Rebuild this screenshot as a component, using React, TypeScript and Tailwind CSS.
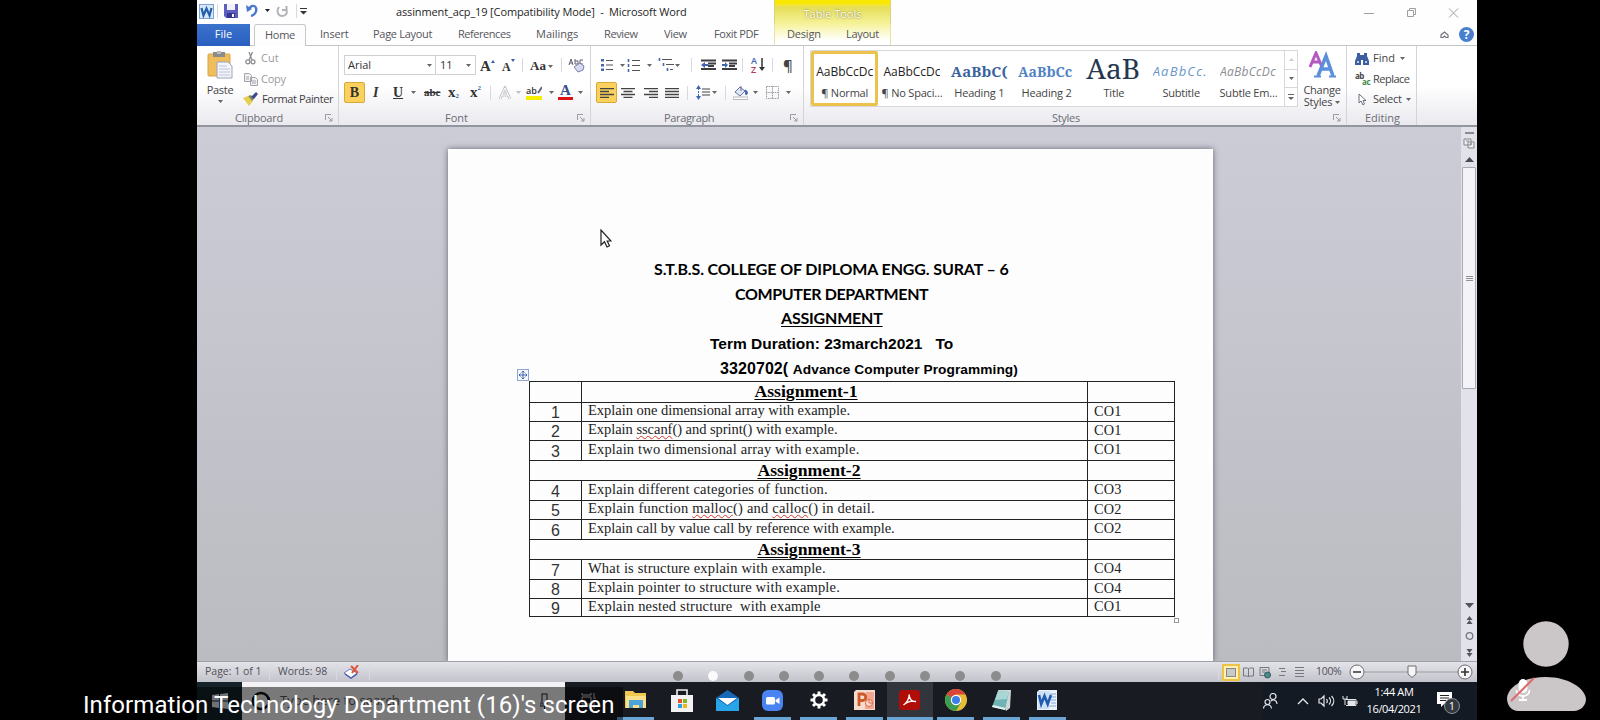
import React from "react";

type Kids = { children?: React.ReactNode; className?: string };

const Caret = ({ className = "" }: { className?: string }) => (
  <svg className={"shrink-0 " + className} width="5" height="3" viewBox="0 0 5 3"><path d="M0 0h5L2.5 3z" fill="#666" /></svg>
);

const Sep = ({ className = "" }: { className?: string }) => <div className={"w-px shrink-0 bg-[#d8d8de] " + className} />;

const Cell = ({ children, className = "" }: Kids) => (
  <div className={"flex h-full shrink-0 items-center whitespace-nowrap " + className}>{children}</div>
);

const Launcher = () => (
  <svg className="shrink-0" width="8" height="8" viewBox="0 0 8 8" fill="none" stroke="#9a9aa2"><path d="M.5 6V.5H6M3 3l4 4M7 4v3H4" /></svg>
);

const GroupLabel = ({ children, className = "" }: Kids) => (
  <div className={"flex h-[13px] items-center text-[11px] leading-none text-[#6c6c74] " + className}>{children}</div>
);

function WordLogo({ size }: { size: number }) {
  return (
    <svg width={size} height={size} viewBox="0 0 20 20">
      <path d="M2 0h18v20H0V2z" fill="#e9f1fb" />
      <path d="M13 4h6M13 7h6M14 10h5M14 13h5M12 16h7" stroke="#7fa4d8" />
      <path d="M1 1h12l-1 18H1z" fill="#cfe0f5" />
      <path d="M2 5l2.200 9L7.500 6l3.200 8L14 5" fill="none" stroke="#1f5bb0" strokeWidth="2.600" />
    </svg>
  );
}

function TitleBar() {
  return (
    <div className="flex h-6 text-[#333]">
      <Cell className="w-[20px] pb-[2px] pl-[2px]">
        <svg width="15" height="15" viewBox="0 0 15 15"><rect x=".5" y=".5" width="14" height="14" fill="#d8e7f8" stroke="#7ea3d3" /><path d="M2.500 4l2 7.500 3-7 3 7 2-7.500" fill="none" stroke="#2260ad" strokeWidth="2.200" /></svg>
      </Cell>
      <Cell className="w-[7px] pb-[2px]"><Sep className="h-[14px]" /></Cell>
      <Cell className="w-[22px] pb-[2px]">
        <svg width="14" height="14" viewBox="0 0 14 14"><path d="M0 0h14v14H2l-2-2z" fill="#5d5fc0" /><path d="M3 0h8v6H3z" fill="#f1f1fb" /><path d="M3 9h8v5H3z" fill="#34368f" /><path d="M8 10h2v3H8z" fill="#fff" /></svg>
      </Cell>
      <Cell className="w-[19px] pb-[3px]">
        <svg width="12" height="13" viewBox="0 0 12 13" fill="none" stroke="#4a78cf" strokeWidth="2.400"><path d="M5 12c4-1 6-5 5-8S5 1 3 5" /><path d="M0 1l1 7 5-3z" fill="#4a78cf" stroke="none" /></svg>
      </Cell>
      <Cell className="w-[11px] pb-[4px]"><svg width="5" height="3"><path d="M0 0h5L2.500 3z" fill="#222" /></svg></Cell>
      <Cell className="w-[20px] pb-[2px]">
        <svg width="13" height="13" viewBox="0 0 13 13" fill="none" stroke="#b2b2b8" strokeWidth="2"><path d="M10.500 1v4H6M3 2C0 6 2 11 6 11s6-3 4-7" /></svg>
      </Cell>
      <Cell className="w-[4px] pb-[2px]"><Sep className="h-[14px]" /></Cell>
      <Cell className="w-[96px] pb-[2px]">
        <svg width="7" height="8" viewBox="0 0 7 8" fill="#333"><path d="M0 1h7v1H0zM0 4h7L3.500 7.500z" /></svg>
      </Cell>
      <Cell className="w-[378px] text-[11px] tracking-[-0.130px] text-[#1e1e1e]">assinment_acp_19 [Compatibility Mode]&nbsp; -&nbsp; Microsoft Word</Cell>
      <div className="flex h-6 w-[117px] shrink-0 items-center justify-center border-x border-[#d9d478] bg-linear-to-b from-[#fbe800] from-15% via-[#e6de55] via-30% to-[#f6f29a] pt-[4px] text-[11px] text-[#fffef0] [text-shadow:0_0_2px_#6d6a2a]">Table Tools</div>
      <Cell className="ml-auto w-[113px] pt-[2px]">
        <svg width="100" height="12" viewBox="0 0 100 12" fill="none" stroke="#a0a0a0"><path d="M0 6.500h10M43.500 3.500h6v6h-6zM45.500 3.500v-2h6v6h-2M85 1.500l9 9M94 1.500l-9 9" /></svg>
      </Cell>
    </div>
  );
}

function TabRow() {
  return (
    <div className="flex h-[22px] border-b border-[#c3c4ca] text-[11px] text-[#55555a]">
      <div className="flex h-[22px] w-[53px] shrink-0 items-center justify-center bg-linear-to-b from-[#3a72cc] to-[#2a5fc0] pb-[1px] text-white">File</div>
      <div className="ml-[4px] flex h-[22px] w-[52px] shrink-0 items-center justify-center rounded-t-[3px] border border-b-0 border-[#c8c9cf] bg-[#fdfdfe] pb-[1px] tracking-[-0.300px]">Home</div>
      <Cell className="ml-[14px] w-[53px] tracking-[-0.200px]">Insert</Cell>
      <Cell className="w-[85px] tracking-[-0.300px]">Page Layout</Cell>
      <Cell className="w-[78px] tracking-[-0.450px]">References</Cell>
      <Cell className="w-[68px]">Mailings</Cell>
      <Cell className="w-[60px] tracking-[-0.400px]">Review</Cell>
      <Cell className="w-[50px] tracking-[-0.300px]">View</Cell>
      <Cell className="w-[60px] tracking-[-0.400px]">Foxit PDF</Cell>
      <div className="flex h-[21px] w-[117px] shrink-0 border-x border-[#e8e4a8] bg-linear-to-b from-[#f6f29a] to-white to-80%">
        <Cell className="w-[71px] pl-[12px] tracking-[-0.200px]">Design</Cell>
        <Cell className="tracking-[-0.300px]">Layout</Cell>
      </div>
      <div className="ml-auto flex items-center gap-[10px] pr-[3px]">
        <svg width="9" height="8" viewBox="0 0 9 8" fill="none" stroke="#707078" strokeWidth="1.200"><path d="M1 4l3.500-3L8 4v2.500H6L4.500 5 3 6.500H1z" /></svg>
        <div className="flex h-[15px] w-[15px] items-center justify-center rounded-full bg-[#4a7fd0] text-[12px] font-bold text-white">?</div>
      </div>
    </div>
  );
}

function ClipboardGroup() {
  return (
    <div className="flex w-[142px] shrink-0 flex-col border-r border-[#d3d3da]">
      <div className="flex h-[65px]">
        <div className="flex w-[46px] shrink-0 flex-col items-center pt-[5px] text-[11px] leading-none">
          <svg width="27" height="29" viewBox="0 0 27 29"><rect x="1" y="3" width="22" height="22" rx="1" fill="#f0bd5c" stroke="#d9a545" /><path d="M6 1h12v5H6z" fill="#8b8b8e" /><rect x="10" y="0" width="4" height="3" fill="#bbb" /><path d="M10 11h11l4 4v12H10z" fill="#f3f5fb" stroke="#9aa3bb" /><path d="M12 15h8M12 18h11M12 21h11M12 24h11" stroke="#bcc5d8" /></svg>
          <span className="mt-[4px] tracking-[-0.300px]">Paste</span>
          <Caret className="mt-[5px]" />
        </div>
        <div className="flex flex-col pt-[2px] text-[11px] whitespace-nowrap text-[#9b9ba1]">
          <div className="flex h-[21px] items-center">
            <svg className="mr-[5px] ml-[2px]" width="11" height="13" viewBox="0 0 11 13" fill="none" stroke="#8c8c92" strokeWidth="1.300"><path d="M4 0l3 8M7.500 0L4 8" /><circle cx="2.800" cy="9.800" r="2" /><circle cx="8" cy="9.800" r="2" /></svg>Cut
          </div>
          <div className="flex h-[20px] items-center tracking-[-0.300px]">
            <svg className="mr-[3px]" width="15" height="13" viewBox="0 0 15 13" fill="#f0f0f2" stroke="#a5a5ad"><path d="M1.500.5h5l2 2v6h-7zM7.500 4.500h5l2 2v6h-7zM3 4h3M3 6h3M9 8h4M9 10h4" /></svg>Copy
          </div>
          <div className="flex h-[20px] items-center tracking-[-0.400px] text-[#3f3f44]">
            <svg className="mr-[4px]" width="15" height="14" viewBox="0 0 15 14"><path d="M0 6l5-2 5 5-4 5z" fill="#e6cf4f" /><path d="M5 4l4 5 2-2-3-4z" fill="#8a8a5a" /><path d="M8 5l5-5 2 2-4 5z" fill="#3f4a8a" /></svg>Format Painter
          </div>
        </div>
      </div>
      <GroupLabel className="justify-between pr-[5px] pl-[38px] tracking-[-0.200px]">Clipboard<Launcher /></GroupLabel>
    </div>
  );
}

function FontGroup() {
  return (
    <div className="flex w-[252px] shrink-0 flex-col border-r border-[#d3d3da]">
      <div className="flex h-[65px] flex-col pt-[9px] pl-[5px] text-[#333]">
        <div className="flex h-[20px] text-[11px]">
          <Cell className="w-[92px] justify-between border border-[#d0d0d6] bg-white px-[3px]">Arial<Caret /></Cell>
          <Cell className="w-[40px] justify-between border border-l-0 border-[#d0d0d6] bg-white px-[4px]">11<Caret /></Cell>
          <Cell className="w-[21px] pt-[2px] pl-[4px] font-['Liberation_Serif',serif] text-[15px] font-bold">A<svg className="-mt-[10px]" width="4" height="3"><path d="M0 3h4L2 0z" fill="#3c5ea8" /></svg></Cell>
          <Cell className="w-[21px] pt-[4px] pl-[5px] font-['Liberation_Serif',serif] text-[12px] font-bold">A<svg className="-mt-[14px]" width="4" height="3"><path d="M0 0h4L2 3z" fill="#3c5ea8" /></svg></Cell>
          <Cell className="w-[12px] pl-[4px]"><Sep className="h-[14px]" /></Cell>
          <Cell className="w-[31px] gap-[2px] pt-[2px] font-['Liberation_Serif',serif] text-[13px] font-bold">Aa<Caret /></Cell>
          <Cell className="w-[7px]"><Sep className="h-[14px]" /></Cell>
          <Cell>
            <svg width="17" height="16" viewBox="0 0 17 16" fill="none" stroke="#5d6070"><path d="M1 8l2-6 2 6M2 6h3M7 2v5h3V4H7M15 3h-3v4h3" /><path d="M6 10l6-4 4 3-1 4-5 2z" fill="#d7daf0" stroke="#7a80ad" /></svg>
          </Cell>
        </div>
        <div className="mt-[7px] flex h-[21px] font-['Liberation_Serif',serif]">
          <Cell className="w-[21px] justify-center rounded-[2px] border border-[#d9a93a] bg-[#fbd15d] text-[14px] font-bold">B</Cell>
          <Cell className="w-[28px] pl-[8px] text-[14px] font-bold italic">I</Cell>
          <Cell className="w-[31px] gap-[8px] text-[14px] font-bold underline"><span>U</span><Caret /></Cell>
          <Cell className="w-[24px] text-[11px] font-bold line-through">abc</Cell>
          <Cell className="w-[22px] text-[15px] font-bold">x<span className="mt-[8px] text-[7px] text-[#3c5ea8]">2</span></Cell>
          <Cell className="w-[20px] text-[15px] font-bold">x<span className="-mt-[8px] text-[7px] text-[#3c5ea8]">2</span></Cell>
          <Cell className="w-[8px]"><Sep className="h-[14px]" /></Cell>
          <Cell className="w-[28px] gap-[4px]">
            <svg width="14" height="14" viewBox="0 0 14 14" fill="none" stroke="#c5c5cb" strokeWidth="3"><path d="M2 13L7 2l5 11M4 9h6" /><path d="M2 13L7 2l5 11M4 9h6" stroke="#fff" strokeWidth="1" /></svg><Caret className="opacity-40" />
          </Cell>
          <Cell className="w-[32px] gap-[7px] font-['Open_Sans',sans-serif]">
            <span className="flex h-[16px] w-[16px] flex-col text-[9px] leading-[11px] font-semibold"><span className="flex">ab<svg width="6" height="9"><path d="M1 8l4-6" stroke="#667" strokeWidth="2" /></svg></span><span className="h-[4px] bg-[#f5f000]" /></span><Caret />
          </Cell>
          <Cell className="gap-[5px]">
            <span className="flex h-[16px] w-[15px] flex-col items-center text-[15px] leading-[11px] font-bold text-[#34508f]">A<span className="mt-[1px] h-[3px] w-full bg-[#dc1216]" /></span><Caret />
          </Cell>
        </div>
      </div>
      <GroupLabel className="justify-between pr-[5px] pl-[106px]">Font<Launcher /></GroupLabel>
    </div>
  );
}

const linesLeft = "M0 .5h14M0 3.500h9M0 6.500h14M0 9.500h9";
const linesCenter = "M0 .5h14M2.500 3.500h9M0 6.500h14M2.500 9.500h9";
const linesRight = "M0 .5h14M5 3.500h9M0 6.500h14M5 9.500h9";
const linesFull = "M0 .5h14M0 3.500h14M0 6.500h14M0 9.500h14";

const Align = ({ d }: { d: string }) => (
  <svg width="14" height="10" viewBox="0 0 14 10" fill="none" stroke="#444" strokeWidth="1.400"><path d={d} /></svg>
);

function ParagraphGroup() {
  return (
    <div className="flex w-[213px] shrink-0 flex-col border-r border-[#d3d3da]">
      <div className="flex h-[65px] flex-col pt-[9px] pl-[5px]">
        <div className="flex h-[20px]">
          <Cell className="w-[31px] gap-[7px] pl-[5px]"><svg width="12" height="12" viewBox="0 0 12 12"><path d="M0 0h3v2.500H0zM0 5h3v2.500H0zM0 9.500h3V12H0z" fill="#4766ad" /><path d="M5 1.500h7M5 6h7M5 10.500h7" stroke="#555" strokeWidth="1.200" /></svg><Caret /></Cell>
          <Cell className="w-[31px] gap-[7px]"><svg width="13" height="13" viewBox="0 0 13 13"><path d="M1.500 0v3M1.500 5v3M1.500 10v3" stroke="#4766ad" strokeWidth="1.600" /><path d="M5 1.500h8M5 6.500h8M5 11.500h8" stroke="#555" strokeWidth="1.200" /></svg><Caret /></Cell>
          <Cell className="w-[30px]"><svg width="17" height="14" viewBox="0 0 17 14"><path d="M1.500 0v3M5.500 5v3M9.500 10v3" stroke="#4766ad" strokeWidth="1.600" /><path d="M4 1.500h10M8 6.500h8M12 11.500h3" stroke="#555" strokeWidth="1.200" /></svg><Caret /></Cell>
          <Cell className="w-[13px] pl-[3px]"><Sep className="h-[14px]" /></Cell>
          <Cell className="w-[21px]"><svg width="15" height="12" viewBox="0 0 15 12"><path d="M0 1.500h15M7 4.500h8M7 7h6M0 10h15" stroke="#3e3e44" strokeWidth="1.800" /><path d="M0 6l4-3v2h3v2H4v2z" fill="#3f64b5" /></svg></Cell>
          <Cell className="w-[20px]"><svg width="15" height="12" viewBox="0 0 15 12"><path d="M0 1.500h15M7 4.500h8M7 7h6M0 10h15" stroke="#3e3e44" strokeWidth="1.800" /><path d="M6 6L3 3v2H0v2h3v2z" fill="#3f64b5" /></svg></Cell>
          <Cell className="w-[9px]"><Sep className="h-[14px]" /></Cell>
          <Cell className="w-[21px] gap-[2px]"><span className="flex flex-col text-[9px] leading-[9px] font-semibold"><span className="text-[#3f64b5]">A</span><span className="text-[#b04050]">Z</span></span><svg width="6" height="14" viewBox="0 0 6 14"><path d="M3 0v10" stroke="#333" strokeWidth="1.500" /><path d="M0 9h6l-3 4z" fill="#333" /></svg></Cell>
          <Cell className="w-[11px]"><Sep className="h-[14px]" /></Cell>
          <Cell className="text-[15px] font-semibold text-[#444]">¶</Cell>
        </div>
        <div className="mt-[7px] flex h-[21px]">
          <Cell className="w-[21px] justify-center rounded-[2px] border border-[#d9a93a] bg-[#fbd15d]"><Align d={linesLeft} /></Cell>
          <Cell className="w-[27px] pl-[4px]"><Align d={linesCenter} /></Cell>
          <Cell className="w-[21px]"><Align d={linesRight} /></Cell>
          <Cell className="w-[22px]"><Align d={linesFull} /></Cell>
          <Cell className="w-[9px]"><Sep className="h-[14px]" /></Cell>
          <Cell className="w-[29px] gap-[2px]"><svg width="14" height="15" viewBox="0 0 14 15"><path d="M0 4l2.500-4L5 4zM0 11l2.500 4L5 11z" fill="#3f64b5" /><path d="M2.500 3v9" stroke="#3f64b5" strokeDasharray="2 1" /><path d="M6 4h8M6 7h8M6 10h8" stroke="#444" strokeWidth="1.200" /></svg><Caret /></Cell>
          <Cell className="w-[8px]"><Sep className="h-[14px]" /></Cell>
          <Cell className="w-[33px] gap-[5px]"><svg width="15" height="15" viewBox="0 0 15 15"><path d="M2 7l5-5 5 4-5 5z" fill="#dfe6f4" stroke="#67719a" /><path d="M8 1v5" stroke="#67719a" /><path d="M12 5c3 1 3 4 1 5z" fill="#3f64b5" stroke="#3f64b5" /><path d="M0 12h15v2.500H0z" fill="#fff" stroke="#a7a7ad" strokeWidth=".8" /></svg><Caret /></Cell>
          <Cell className="gap-[7px]"><svg width="13" height="13" viewBox="0 0 13 13" fill="none" stroke="#9e9ea6"><path d="M.5.5h12v12H.5zM6.500 0v13M0 6.500h13" strokeDasharray="1.500 .7" /></svg><Caret /></Cell>
        </div>
      </div>
      <GroupLabel className="justify-between pr-[5px] pl-[73px] tracking-[-0.350px]">Paragraph<Launcher /></GroupLabel>
    </div>
  );
}

const styleTiles = [
  { s: "AaBbCcDc", n: "¶ Normal", c: "pt-[3px] text-[12px] text-[#222]" },
  { s: "AaBbCcDc", n: "¶ No Spaci...", c: "pt-[3px] text-[12px] text-[#222]" },
  { s: "AaBbC(", n: "Heading 1", c: "pt-[3px] font-['Noto_Serif','Liberation_Serif',serif] text-[15px] tracking-[0.100px] font-bold text-[#3a639c]" },
  { s: "AaBbCc", n: "Heading 2", c: "pt-[3px] font-['Noto_Serif','Liberation_Serif',serif] text-[14px] font-bold text-[#5083c2]" },
  { s: "AaB", n: "Title", c: "pb-[5px] pl-[1px] font-['Noto_Serif','Liberation_Serif',serif] text-[28px] text-[#26374f]" },
  { s: "AaBbCc.", n: "Subtitle", c: "pt-[3px] text-[13px] italic tracking-[1.200px] text-[#6a96cc]" },
  { s: "AaBbCcDc", n: "Subtle Em...", c: "pt-[3px] text-[12px] italic tracking-[0.300px] text-[#8d8d92]" },
];

function StylesGroup() {
  return (
    <div className="flex w-[543px] shrink-0 flex-col border-r border-[#d3d3da]">
      <div className="flex h-[65px] pt-[4px] pl-[6px]">
        <div className="flex h-[57px] w-[488px] shrink-0 border border-[#d6d6dc] bg-white">
          {styleTiles.map((t, i) => (
            <div key={t.n} className={"flex w-[67.300px] shrink-0 flex-col items-center overflow-hidden " + (i === 0 ? "rounded-[2px] border-[3px] border-[#ecc24a]" : "pt-[3px]")}>
              <div className={"flex h-[32px] w-[57px] shrink-0 items-center overflow-hidden leading-none whitespace-nowrap " + t.c}>{t.s}</div>
              <div className="text-[11px] leading-[13px] tracking-[-0.200px] whitespace-nowrap text-[#444]">{t.n}</div>
            </div>
          ))}
          <div className="ml-auto flex w-[13px] flex-col divide-y divide-[#d6d6dc] border-l border-[#d6d6dc]">
            <div className="flex flex-1 items-center justify-center"><svg width="5" height="3"><path d="M0 3h5L2.500 0z" fill="#ccc" /></svg></div>
            <div className="flex flex-1 items-center justify-center"><Caret /></div>
            <div className="flex flex-1 items-center justify-center"><svg width="6" height="7"><path d="M0 0h6v1H0zM0 3h6L3 6z" fill="#666" /></svg></div>
          </div>
        </div>
        <div className="flex w-[48px] flex-col items-center pt-[1px] text-[11px] leading-[12px]">
          <svg className="shrink-0" width="28" height="27" viewBox="0 0 28 27" fill="none"><path d="M2 16L8 2l6 14M4 11h8" stroke="#b45ac0" strokeWidth="3" /><path d="M10 25l8-20 7 20M13 18h10" stroke="#5b8fdc" strokeWidth="3.500" /><path d="M6 25.500h7M21 25.500h7" stroke="#5b8fdc" strokeWidth="2" /></svg>
          <span className="mt-[6px] tracking-[-0.250px]">Change</span>
          <span className="flex items-center gap-[3px] tracking-[-0.200px]">Styles<Caret /></span>
        </div>
      </div>
      <GroupLabel className="justify-between pr-[5px] pl-[248px] tracking-[-0.300px]">Styles<Launcher /></GroupLabel>
    </div>
  );
}

function EditingGroup() {
  return (
    <div className="flex w-[70px] shrink-0 flex-col border-r border-[#d3d3da] text-[11px]">
      <div className="flex h-[65px] flex-col pt-[2px] pl-[8px]">
        <div className="flex h-[21px] items-center whitespace-nowrap">
          <svg className="mr-[4px]" width="14" height="13" viewBox="0 0 14 13" fill="#3d5f9f"><path d="M2 1h3v2h4V1h3v3l2 5v4H8V8H6v5H0V9l2-5z" /><path d="M2 9h2v2H2zM10 9h2v2h-2z" fill="#b8c9e8" /></svg>Find<Caret className="ml-[5px]" />
        </div>
        <div className="flex h-[20px] items-center tracking-[-0.500px] whitespace-nowrap">
          <span className="mr-[3px] flex w-[15px] flex-col text-[8px] leading-[6px] font-bold"><span>ab</span><span className="text-right text-[#3e8a4b]">ac</span></span>Replace
        </div>
        <div className="flex h-[20px] items-center tracking-[-0.300px] whitespace-nowrap">
          <svg className="mr-[6px] ml-[3px]" width="9" height="13" viewBox="0 0 9 13" fill="#fff" stroke="#6d7080"><path d="M1 1v9l2-2 2 4 1.500-1L5 7.500h3z" /></svg>Select<Caret className="ml-[4px]" />
        </div>
      </div>
      <GroupLabel className="pl-[18px]">Editing</GroupLabel>
    </div>
  );
}

type Row = { n?: string; t: React.ReactNode; co?: string; h: string; k?: string };
const Bad = ({ children }: Kids) => (
  <span className="underline decoration-[#d8352a] decoration-wavy decoration-[0.8px] underline-offset-[1px] [text-decoration-skip-ink:none]">{children}</span>
);
const rows: Row[] = [
  { t: "Assignment-1", h: "h-[21px]" },
  { n: "1", t: "Explain one dimensional array with example.", co: "CO1", h: "h-[19px]", k: "tracking-[-0.030px]" },
  { n: "2", t: <>Explain <Bad>sscanf</Bad>() and sprint() with example.</>, co: "CO1", h: "h-[19px]", k: "tracking-[-0.040px]" },
  { n: "3", t: "Explain two dimensional array with example.", co: "CO1", h: "h-[20px]", k: "tracking-[0.170px]" },
  { t: "Assignment-2", h: "h-[20px]" },
  { n: "4", t: "Explain different categories of function.", co: "CO3", h: "h-[20px]", k: "tracking-[0.190px]" },
  { n: "5", t: <>Explain function <Bad>malloc</Bad>() and <Bad>calloc</Bad>() in detail.</>, co: "CO2", h: "h-[19px]", k: "tracking-[0.210px]" },
  { n: "6", t: "Explain call by value call by reference with example.", co: "CO2", h: "h-[20px]", k: "tracking-[-0.040px]" },
  { t: "Assignment-3", h: "h-[20px]" },
  { n: "7", t: "What is structure explain with example.", co: "CO4", h: "h-[20px]", k: "tracking-[0.170px]" },
  { n: "8", t: "Explain pointer to structure with example.", co: "CO4", h: "h-[19px]", k: "tracking-[0.170px]" },
  { n: "9", t: <>Explain nested structure&nbsp; with example</>, co: "CO1", h: "h-[18px]", k: "tracking-[0.180px]" },
];

function Page() {
  return (
    <div className="relative mt-[22px] ml-[251px] h-[513px] w-[765px] shrink-0 bg-[#fdfdfe] pt-[108px] text-black shadow-[0_0_6px_rgba(70,70,80,0.75)]">
      <svg className="absolute top-[80px] left-[152px]" width="12" height="19" viewBox="0 0 12 19" fill="#fff" stroke="#222" strokeWidth="1.200"><path d="M1 1v15l3.500-3.300L7 18l2.500-1.200L7.200 12H11z" /></svg>
      <div className="flex h-[124px] flex-col font-['Lato',sans-serif] text-[16px] leading-[24.500px] font-bold whitespace-nowrap">
        <div className="pl-[206px] tracking-[-0.120px]">S.T.B.S. COLLEGE OF DIPLOMA ENGG. SURAT – 6</div>
        <div className="pl-[287px] tracking-[-0.380px]">COMPUTER DEPARTMENT</div>
        <div className="pl-[333px] tracking-[-0.200px] underline underline-offset-2">ASSIGNMENT</div>
        <div className="pt-[1px] pl-[262px] font-['Liberation_Sans',sans-serif] text-[15.500px]">Term Duration: 23march2021&nbsp;&nbsp; To</div>
        <div className="pt-px pl-[272px] font-['Liberation_Sans',sans-serif] text-[16px] tracking-[0.080px]">3320702( <span className="text-[13.700px]">Advance Computer Programming)</span></div>
      </div>
      <svg className="absolute top-[220px] left-[69px]" width="12" height="12" viewBox="0 0 12 12"><rect x=".5" y=".5" width="11" height="11" fill="#f5f8ff" stroke="#8fa5d0" /><path d="M6 2v8M2 6h8M4.500 3.500L6 2l1.500 1.500M4.500 8.500L6 10l1.500-1.500M3.500 4.500L2 6l1.500 1.500M8.500 4.500L10 6 8.500 7.500" fill="none" stroke="#4467b0" /></svg>
      <div className="absolute top-[469px] left-[726px] h-[5px] w-[5px] border border-[#999]" />
      <div className="ml-[81px] flex w-[646px] flex-col border-r border-b border-l border-[#222]">
        {rows.map((r, i) => (
          <div key={i} className={"flex border-t border-[#222] " + r.h}>
            {(r.n || i === 0) && <div className="flex w-[52px] shrink-0 items-center justify-center border-r border-[#222] pt-[2px] font-['Liberation_Sans',sans-serif] text-[16px] leading-none text-[#333]">{r.n}</div>}
            <div className={"flex flex-1 items-center border-r border-[#222] font-['Liberation_Serif',serif] leading-none whitespace-pre " + (r.n ? "pl-[6px] text-[14.500px] text-[#222] " + r.k : "justify-center text-[17.700px] font-bold underline underline-offset-2 " + (i === 0 ? "pr-[57px]" : "pl-px"))}>
              {r.n ? <span className="pb-[3px]">{r.t}</span> : r.t}
            </div>
            <div className="flex w-[86px] shrink-0 items-center pb-[2px] pl-[6px] font-['Liberation_Serif',serif] text-[14.300px] leading-none tracking-[0.200px] text-[#222]">{r.co}</div>
          </div>
        ))}
      </div>
    </div>
  );
}

function ScrollBar() {
  return (
    <div className="flex w-[16px] shrink-0 flex-col items-center bg-[#e2e2ea]">
      <div className="mt-[5px] h-[2px] w-[9px] bg-[#8b8b94]" />
      <svg className="mt-[3px] shrink-0" width="12" height="12" viewBox="0 0 12 12" fill="#eee" stroke="#85858f"><path d="M1 2h7v6H1zM5 5h6v6H5zM3 4h3M7 7h2" /></svg>
      <svg className="mt-[8px] shrink-0" width="9" height="5"><path d="M0 5h9L4.500 0z" fill="#4c4c54" /></svg>
      <div className="mt-[5px] flex h-[222px] w-[14px] flex-col items-center justify-center gap-px rounded-[1px] border border-[#a9a9b3] bg-[#f4f4f8]">
        <div className="h-px w-[7px] bg-[#909098]" /><div className="h-px w-[7px] bg-[#909098]" /><div className="h-px w-[7px] bg-[#909098]" />
      </div>
      <svg className="mt-auto mb-[4px] shrink-0" width="9" height="54" viewBox="0 0 9 54" fill="#55555d"><path d="M0 0h9L4.500 5zM1.500 17h6l-3-4zM1.500 21h6l-3-4zM1.500 46h6l-3 4zM1.500 50h6l-3 4z" /><circle cx="4.500" cy="33" r="3.300" fill="none" stroke="#777780" strokeWidth="1.300" /></svg>
    </div>
  );
}

function StatusBar() {
  return (
    <div className="flex h-[21px] shrink-0 items-center border-t border-[#9da1ab] bg-linear-to-b from-[#e3e3e9] to-[#c3c3cb] text-[10.500px] text-[#50505a]">
      <Cell className="w-[72px] pl-[8px]">Page: 1 of 1</Cell>
      <Cell className="w-[9px]"><Sep className="h-[16px] bg-[#a5a5ad]" /></Cell>
      <Cell className="w-[58px]">Words: 98</Cell>
      <Cell className="w-[8px]"><Sep className="h-[16px] bg-[#a5a5ad]" /></Cell>
      <Cell className="w-[25px]"><svg width="16" height="14" viewBox="0 0 16 14"><path d="M0 8l6-4 7 4-6 5z" fill="#fff" stroke="#6a79c0" /><path d="M1 9l6 4 6-4" fill="none" stroke="#4a5cb8" strokeWidth="1.500" /><path d="M7 1l7 7M14 0L8 8" stroke="#e0553c" strokeWidth="2" /></svg></Cell>
      <Cell><Sep className="h-[16px] bg-[#a5a5ad]" /></Cell>
      <div className="ml-auto flex h-full w-[259px] items-center">
        <Cell className="w-[4px]"><Sep className="h-[16px] bg-[#a5a5ad]" /></Cell>
        <div className="flex h-[17px] w-[18px] shrink-0 items-center justify-center border-2 border-[#eec243] bg-[#fff0b5]"><div className="h-[9px] w-[10px] border border-[#888] bg-[#c9c9c9]" /></div>
        <svg className="ml-[3px] shrink-0" width="64" height="13" viewBox="0 0 64 13" fill="none" stroke="#777780"><path d="M.5 2h4l1 1 1-1h4v8h-4l-1 1-1-1h-4zM5.500 3v8M17 1.500h9v8h-9zM19 4h5M19 6h3M36 2.500h6M38 5.500h5M36 9.500h6M52 1.500h9M52 4.500h9M52 7.500h9M52 10.500h9" /><circle cx="24.500" cy="9" r="3" fill="#3f8f86" stroke="#456" /></svg>
        <span className="ml-[9px] w-[33px] shrink-0 tracking-[-0.300px] whitespace-nowrap">100%</span>
        <svg className="shrink-0" width="124" height="16" viewBox="0 0 124 16" fill="#f6f6f8" stroke="#6c6c74"><path d="M15 8h100" stroke="#999aa2" /><circle cx="8" cy="8" r="7" /><circle cx="116" cy="8" r="7" /><path d="M4 8h8M112 8h8M116 4v8" stroke="#333" strokeWidth="1.600" /><path d="M59 2h8v8l-4 3.500L59 10z" /></svg>
      </div>
    </div>
  );
}

const apps: { k: string; line: boolean; active?: boolean; icon: React.ReactNode }[] = [
  { k: "files", line: true, icon: <svg width="22" height="20" viewBox="0 0 22 20"><path d="M0 1h8l2 2h11v15H0z" fill="#f0c850" /><path d="M1 6h20v12H1z" fill="#fbe08a" /><path d="M4 10h14v8h-4v-3H8v3H4z" fill="#4ba3dc" /></svg> },
  { k: "store", line: false, icon: <svg width="22" height="23" viewBox="0 0 22 23"><path d="M0 6h22v17H0z" fill="#f2f2f2" /><path d="M6 6V1h10v5" fill="none" stroke="#f2f2f2" strokeWidth="1.600" /><path d="M7 10h4v4H7z" fill="#e5532d" /><path d="M12 10h4v4h-4z" fill="#7fb62b" /><path d="M7 15h4v4H7z" fill="#2e9fe0" /><path d="M12 15h4v4h-4z" fill="#f2b522" /></svg> },
  { k: "mail", line: false, icon: <svg width="23" height="21" viewBox="0 0 23 21"><path d="M0 8l11.500-8L23 8v13H0z" fill="#1668b8" /><path d="M0 8l11.500 8L23 8v13H0z" fill="#27a5e8" /><path d="M2 8h19l-9.500 7z" fill="#fff" /></svg> },
  { k: "zoom", line: true, icon: <svg width="21" height="21" viewBox="0 0 21 21"><rect width="21" height="21" rx="6" fill="#4a84f2" /><rect x="4" y="7" width="9" height="7.500" rx="1.500" fill="#fff" /><path d="M13.500 10l4-2.500v6.500l-4-2.500z" fill="#fff" /></svg> },
  { k: "settings", line: true, icon: <svg width="18" height="18" viewBox="-9 -9 18 18" fill="none" stroke="#fff"><circle r="5" strokeWidth="2.400" /><path d="M0-8.500v3M0 5.500v3M-8.500 0h3M5.500 0h3M-6-6l2 2M4 4l2 2M-6 6l2-2M4-4l2-2" strokeWidth="3" /></svg> },
  { k: "powerpoint", line: true, icon: <svg width="21" height="20" viewBox="0 0 21 20"><path d="M2 0h19v20H0V2z" fill="#f6dccf" /><path d="M12 2h8v17h-9z" fill="#f3a68f" /><path d="M5 16V4h3.500a3 3 0 010 6.500H5" fill="none" stroke="#cc5a28" strokeWidth="2.800" /><circle cx="15" cy="13" r="3.500" fill="#f6dccf" stroke="#e06a4c" /><path d="M15 9v4h4" stroke="#e06a4c" fill="none" /></svg> },
  { k: "acrobat", line: true, active: true, icon: <svg width="21" height="20" viewBox="0 0 21 20"><rect width="21" height="20" rx="3.500" fill="#b00c08" /><path d="M4.500 15c3-2 6-6.500 5.700-10.500C10 9 13 12 17 11.500c-4-1-9 .5-12.500 3.500z" fill="none" stroke="#fff" strokeWidth="1.400" /></svg> },
  { k: "chrome", line: true, icon: <svg width="22" height="22" viewBox="0 0 22 22"><circle cx="11" cy="11" r="11" fill="#e8bd35" /><path d="M11 11L1.500 5.500A11 11 0 0120.500 5.500H11z" fill="#d9453a" /><path d="M11 11L1.500 5.500A11 11 0 0011 22l5-8.500z" fill="#3d9c50" /><circle cx="11" cy="11" r="5.200" fill="#fff" /><circle cx="11" cy="11" r="4" fill="#3f7de8" /></svg> },
  { k: "notepad", line: true, icon: <svg width="21" height="21" viewBox="0 0 21 21"><path d="M7 0h13l-1 18-4 3z" fill="#cdd8d6" /><path d="M7 1l11 1-4 18L1 17z" fill="#6fb3b5" /><path d="M7 1l11 1-2 7-12 1z" fill="#a9d5d4" /><path d="M1 17l13 3 .5-2L2 15z" fill="#e8efee" /></svg> },
  { k: "word", line: true, icon: <WordLogo size={20} /> },
];

function TaskBar() {
  return (
    <div className="flex h-[38px] shrink-0 bg-[#181b22] text-white">
      <div className="flex w-[45px] shrink-0 items-center justify-center bg-[#15222a]">
        <svg width="16" height="16" viewBox="0 0 16 16" fill="#dfe3e6"><path d="M0 2l7-1v6.500H0zM8 1l8-1v7.500H8zM0 8.500h7V15l-7-1zM8 8.500h8V16l-8-1z" /></svg>
      </div>
      <div className="flex w-[323px] shrink-0 items-center bg-[#f4f2f5] text-[#555]">
        <svg className="ml-[9px]" width="20" height="20" viewBox="0 0 20 20" fill="none" stroke="#111" strokeWidth="2.600"><circle cx="10" cy="10" r="8" /></svg>
        <span className="ml-[9px] text-[13px]">Type here to search</span>
        <svg className="mr-[16px] ml-auto" width="9" height="17" viewBox="0 0 9 17" fill="none" stroke="#222"><rect x="2" y="1" width="5" height="10" /><path d="M0 9v4h4.500v3" /></svg>
      </div>
      <div className="flex w-[48px] shrink-0 items-center justify-center">
        <svg width="16" height="16" viewBox="0 0 16 16" fill="none" stroke="#ccc"><path d="M1 4h9v7H1zM1 0v2h9V0M1 15v-2h9v2M13 0v4M13 7v9M12 5h3" /></svg>
      </div>
      {apps.map((a) => (
        <div key={a.k} className={"flex w-[45.700px] shrink-0 flex-col items-center " + (a.active ? "bg-[#32353c]" : "")}>
          <div className="flex flex-1 items-center pt-[1px]">{a.icon}</div>
          <div className={"h-[3px] " + (a.active ? "w-full " : "w-[37px] ") + (a.line ? "bg-[#6ba5d6]" : "")} />
        </div>
      ))}
      <div className="ml-auto flex h-full items-center bg-[#131a24]">
        <Cell className="w-[34px]"><svg width="15" height="16" viewBox="0 0 15 16" fill="none" stroke="#e4e6ea" strokeWidth="1.200"><circle cx="10" cy="3.500" r="3" /><circle cx="4.500" cy="9" r="2.500" /><path d="M.5 15.500c.5-5 7.500-5 8 0M8 8c2-2 6-1 6 3" /></svg></Cell>
        <Cell className="w-[21px]"><svg width="12" height="8" viewBox="0 0 12 8" fill="none" stroke="#e4e6ea" strokeWidth="1.400"><path d="M1 7l5-5 5 5" /></svg></Cell>
        <Cell className="w-[24px]"><svg width="17" height="14" viewBox="0 0 17 14" fill="none" stroke="#e4e6ea" strokeWidth="1.200"><path d="M1 5h2l3-3v10L3 9H1zM8.500 5c1 1.500 1 3 0 4M11 3.500c2 2 2 5 0 7M13.500 2c3 3 3 7 0 10" /></svg></Cell>
        <Cell className="w-[19px]"><svg width="16" height="11" viewBox="0 0 16 11" fill="none" stroke="#e4e6ea"><path d="M4 3.500h10v6H4" /><path d="M6 5h7v3.500H6z" fill="#e4e6ea" /><path d="M15 5v3M1 0v3h4V0M3 3v6" /></svg></Cell>
        <div className="flex w-[66px] flex-col items-center pb-px text-[11px] leading-[16.500px] tracking-[-0.350px]"><span>1:44 AM</span><span>16/04/2021</span></div>
        <div className="ml-[10px] flex w-[40px] items-center pt-[4px]">
          <svg width="24" height="24" viewBox="0 0 24 24"><path d="M0 1h15v12H7l-3 3v-3H0z" fill="#fff" /><path d="M3 4.500h9M3 7h9M3 9.500h6" stroke="#222" /><circle cx="15" cy="15" r="7.500" fill="#34383e" stroke="#8b8f94" /><text x="15" y="19" fontSize="11" textAnchor="middle" fill="#fff" fontFamily="Open Sans, sans-serif">1</text></svg>
        </div>
      </div>
    </div>
  );
}

const dots = [0, 1, 2, 3, 4, 5, 6, 7, 8, 9];

export default function App() {
  return (
    <div className="relative flex h-[720px] w-[1600px] overflow-hidden bg-black font-['Open_Sans','Noto_Sans',sans-serif]">
      <div className="ml-[197px] flex w-[1280px] shrink-0 flex-col overflow-hidden bg-[#fefefe]">
        <TitleBar />
        <TabRow />
        <div className="flex h-[81px] shrink-0 border-b-2 border-[#93969f] bg-linear-to-b from-white from-50% to-[#e9e9ef] text-[#444]">
          <ClipboardGroup />
          <FontGroup />
          <ParagraphGroup />
          <StylesGroup />
          <EditingGroup />
        </div>
        <div className="flex h-[534px] shrink-0 overflow-hidden bg-linear-to-b from-[#cbccd6] to-[#bbbcc1]">
          <Page />
          <div className="flex-1" />
          <ScrollBar />
        </div>
        <StatusBar />
        <TaskBar />
      </div>
      <div className="flex flex-1 flex-col items-center pt-[620px] pl-[15px]">
        <svg className="shrink-0" width="80" height="92" viewBox="0 0 80 92"><circle cx="40" cy="24" r="22.700" fill="#cbc6c8" /><path d="M12 91C6 91 1 86 1 78 2 66 18 57 40 57s39 11 40 22c0 7-6 12-12 12z" fill="#cbc6c8" /><g fill="none" stroke="#fff" strokeWidth="1.800"><rect x="13.500" y="60" width="7" height="12" rx="3.500" fill="#fff" /><path d="M10.500 70c0 8 13 8 13 0M17 76v4M13 80h8" /></g><path d="M5 81L28 58" stroke="#e06a6c" strokeWidth="2" /></svg>
      </div>
      <div className="absolute top-[671px] left-[673px] flex gap-[25.300px]">
        {dots.map((d) => (
          <div key={d} className={"h-[10px] w-[10px] rounded-full " + (d === 1 ? "bg-[#fafafa]" : "bg-[#8c8c8e]")} />
        ))}
      </div>
      <div className="absolute top-[687px] left-[73px] flex h-[33px] w-[550px] items-center bg-black/50 pt-[2px] pl-[10px] font-['Roboto',sans-serif] text-[24px] leading-none tracking-[0.070px] whitespace-nowrap text-white">Information Technology Department (16)'s screen</div>
    </div>
  );
}
